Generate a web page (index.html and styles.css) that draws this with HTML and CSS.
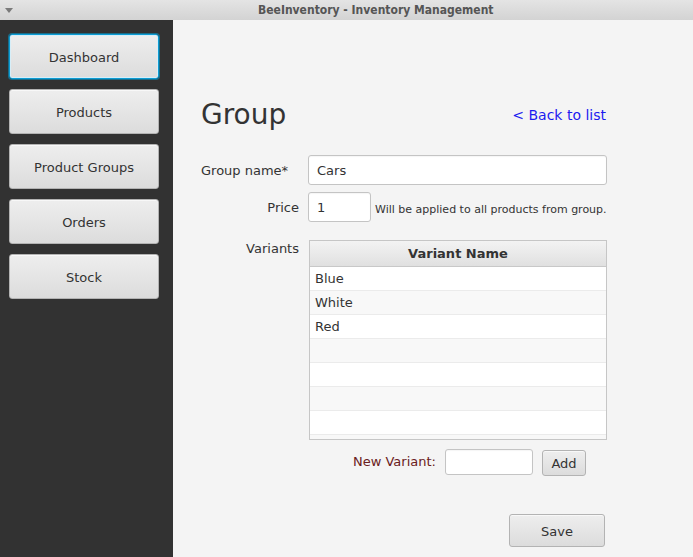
FILE: index.html
```html
<!DOCTYPE html>
<html>
<head>
<meta charset="utf-8">
<title>BeeInventory - Inventory Management</title>
<link rel="stylesheet" href="styles.css">
</head>
<body>
<div class="window">
  <header class="titlebar">
    <span class="menu-arrow"></span>
    <span class="title">BeeInventory - Inventory Management</span>
  </header>
  <div class="main-area">
    <nav class="sidebar">
      <button class="nav-btn focused">Dashboard</button>
      <button class="nav-btn">Products</button>
      <button class="nav-btn">Product Groups</button>
      <button class="nav-btn">Orders</button>
      <button class="nav-btn">Stock</button>
    </nav>
    <main class="content">
      <div class="form">
        <div class="head">
          <h1 class="heading">Group</h1>
          <a class="back">&lt; Back to list</a>
        </div>
        <div class="row row-name">
          <div class="lbl lbl-start">Group name*</div>
          <div class="input name-input">Cars</div>
        </div>
        <div class="row row-price">
          <div class="lbl">Price</div>
          <div class="input price-input">1</div>
          <span class="hint">Will be applied to all products from group.</span>
        </div>
        <div class="row row-variants">
          <div class="lbl lbl-top">Variants</div>
          <div class="table">
            <div class="thead">Variant Name</div>
            <div class="tr">Blue</div>
            <div class="tr odd">White</div>
            <div class="tr">Red</div>
            <div class="tr odd"></div>
            <div class="tr"></div>
            <div class="tr odd"></div>
            <div class="tr"></div>
            <div class="tr odd"></div>
          </div>
        </div>
        <div class="new-variant">
          <span class="nv-label">New Variant:</span>
          <div class="input nv-input"></div>
          <button class="btn add-btn">Add</button>
        </div>
        <div class="actions">
          <button class="btn save-btn">Save</button>
        </div>
      </div>
    </main>
  </div>
</div>
</body>
</html>
```

FILE: styles.css
```css
* { box-sizing: border-box; }

html, body {
  margin: 0;
  padding: 0;
  width: 693px;
  height: 557px;
  overflow: hidden;
}

body {
  font-family: "DejaVu Sans", "Liberation Sans", sans-serif;
  font-size: 13px;
  color: #333333;
  background: #f4f4f4;
}

.window {
  display: flex;
  flex-direction: column;
  width: 693px;
  height: 557px;
}

.titlebar {
  height: 20px;
  flex: none;
  display: flex;
  align-items: center;
  background: linear-gradient(#e4e4e4, #d3d3d3);
  position: relative;
}

.menu-arrow {
  width: 0;
  height: 0;
  margin-left: 5px;
  margin-top: 1px;
  border-left: 4px solid transparent;
  border-right: 4px solid transparent;
  border-top: 5px solid #7a7a7a;
}

.title {
  margin-left: 245px;
  font-family: "DejaVu Sans Condensed", "DejaVu Sans", sans-serif;
  font-stretch: condensed;
  font-weight: bold;
  font-size: 12px;
  color: #555555;
  white-space: nowrap;
}

.main-area {
  flex: 1;
  display: flex;
}

.sidebar {
  width: 173px;
  flex: none;
  background: #323232;
  padding: 14px 0 0 9px;
  display: flex;
  flex-direction: column;
  gap: 10px;
}

.nav-btn, .btn {
  font-family: "DejaVu Sans", "Liberation Sans", sans-serif;
  font-size: 13px;
  color: #333333;
  background: linear-gradient(#eeeeee, #dcdcdc);
  border: 1px solid #b3b3b3;
  border-radius: 3px;
  box-shadow: inset 0 1px 0 #f8f8f8;
  padding: 0;
  margin: 0;
}

.nav-btn {
  width: 150px;
  height: 45px;
  padding-top: 2px;
}

.nav-btn.focused {
  border: 1px solid #0c9cd4;
  box-shadow: 0 0 0 1px rgba(3, 158, 211, 0.55), inset 0 0 0 1px #d6eef8;
}

.content {
  flex: 1;
  padding-left: 28px;
}

.form {
  width: 406px;
  display: flex;
  flex-direction: column;
}

.head {
  margin-top: 75px;
  height: 40px;
  display: flex;
  align-items: center;
  justify-content: space-between;
}

.heading {
  margin: 0;
  font-weight: normal;
  font-size: 28px;
  line-height: 40px;
  color: #333333;
}

.back {
  font-size: 14px;
  color: #1b1bf0;
  margin-right: 1px;
  cursor: pointer;
}

.row {
  display: flex;
  align-items: center;
}

.lbl {
  width: 98px;
  flex: none;
  text-align: right;
  margin-right: 9px;
}

.lbl-start { text-align: left; }

.input {
  background: #ffffff;
  border: 1px solid #c4c4c4;
  border-radius: 3px;
  box-shadow: inset 0 1px 1px rgba(0, 0, 0, 0.04);
  padding-left: 8px;
  display: flex;
  align-items: center;
  color: #333333;
}

.row-name { margin-top: 20px; }

.name-input {
  width: 299px;
  height: 30px;
}

.row-price { margin-top: 7px; }

.price-input {
  width: 63px;
  height: 30px;
}

.hint {
  font-size: 11px;
  margin-left: 4px;
  margin-top: 4px;
  white-space: nowrap;
}

.row-variants {
  margin-top: 18px;
  align-items: flex-start;
}

.lbl-top {
  padding-top: 1px;
  margin-right: 10px;
}

.table {
  width: 299px;
  height: 200px;
  border: 1px solid #c6c6c6;
  background: #ffffff;
  overflow: hidden;
}

.thead {
  height: 26px;
  display: flex;
  align-items: center;
  justify-content: center;
  font-weight: bold;
  background: linear-gradient(#f3f3f3, #e0e0e0);
  border-bottom: 1px solid #c8c8c8;
}

.tr {
  height: 24px;
  border-bottom: 1px solid #ebebeb;
  padding-left: 5px;
  display: flex;
  align-items: center;
  background: #ffffff;
}

.tr.odd { background: #f8f8f8; }

.new-variant {
  margin-top: 9px;
  margin-left: 152px;
  display: flex;
  align-items: center;
}

.nv-label {
  color: #6a2020;
  margin-right: 9px;
  margin-top: -2px;
}

.nv-input {
  width: 88px;
  height: 26px;
  margin-top: -1px;
}

.add-btn {
  margin-left: 9px;
  width: 44px;
  height: 26px;
  margin-top: 1px;
}

.actions {
  margin-top: 38px;
  display: flex;
  justify-content: flex-end;
  padding-right: 2px;
}

.save-btn {
  width: 96px;
  height: 33px;
  padding-top: 2px;
}
```
